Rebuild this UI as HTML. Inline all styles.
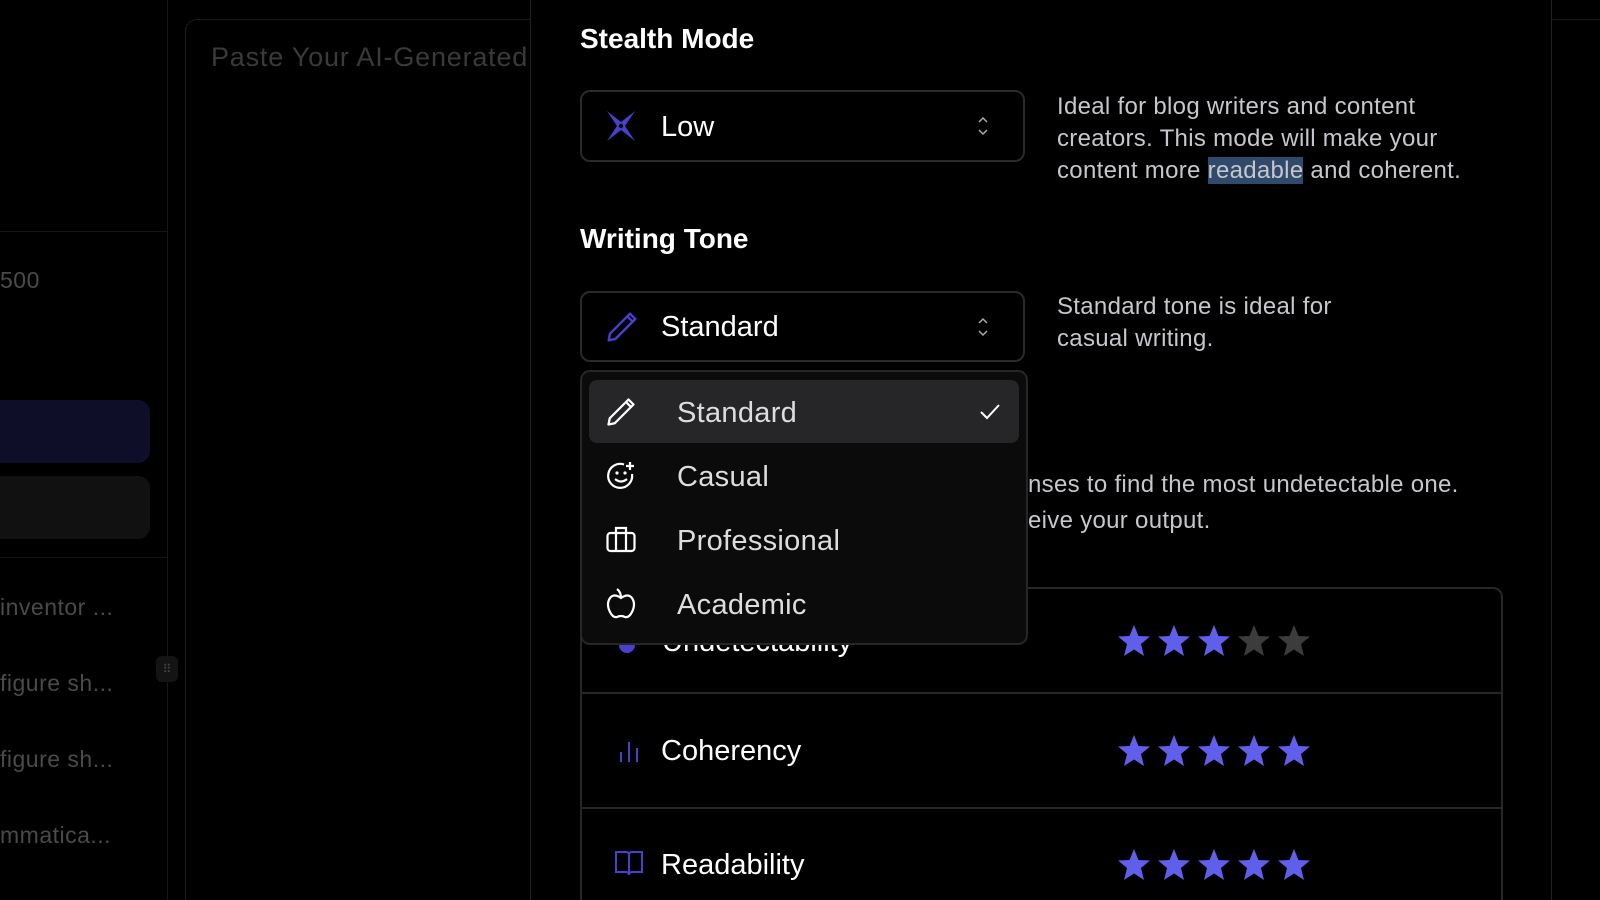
<!DOCTYPE html>
<html><head><meta charset="utf-8"><style>
*{box-sizing:border-box;margin:0;padding:0}
html,body{width:1600px;height:900px;overflow:hidden;background:#000}
body{font-family:"Liberation Sans",sans-serif}
#w{position:relative;width:1600px;height:900px;overflow:hidden}
.a{position:absolute;white-space:nowrap}
.side{color:#4a4a4a;font-size:23px;letter-spacing:0.5px}
</style></head><body><div id="w">
<div class="a" style="left:167px;top:0;width:1px;height:900px;background:#161616"></div>
<div class="a" style="left:0;top:231px;width:167px;height:1px;background:#161616"></div>
<div class="a" style="left:0;top:557px;width:167px;height:1px;background:#161616"></div>
<div class="a side" style="left:0;top:267px">500</div>
<div class="a" style="left:-20px;top:400px;width:170px;height:63px;border-radius:12px;background:#0e0e28"></div>
<div class="a" style="left:-20px;top:476px;width:170px;height:63px;border-radius:12px;background:#111"></div>
<div class="a side" style="left:0;top:594px">inventor ...</div>
<div class="a side" style="left:0;top:670px">figure sh...</div>
<div class="a side" style="left:0;top:746px">figure sh...</div>
<div class="a side" style="left:0;top:822px">mmatica...</div>
<div class="a" style="left:156px;top:656px;width:22px;height:26px;border-radius:6px;background:#141414;color:#444;font-size:12px;text-align:center;line-height:26px">⠿</div>
<div class="a" style="left:185px;top:19px;width:1415px;height:881px;border:1px solid #1a1a1a;border-right:none;border-bottom:none;border-radius:12px 0 0 0"></div>
<div class="a" style="left:211px;top:42px;color:#3a3a3a;font-size:27px;letter-spacing:0.8px">Paste Your AI-Generated</div>
<div class="a" style="left:530px;top:0;width:1022px;height:900px;background:#000;border-left:1px solid #222;border-right:1px solid #222"></div>
<div class="a" style="left:580px;top:23px;color:#fff;font-size:28px;font-weight:bold">Stealth Mode</div>
<div class="a" style="left:580px;top:90px;width:445px;height:72px;border:2px solid #2a2a2a;border-radius:10px"></div>
<svg class="a" style="left:605px;top:110px" width="32" height="32" viewBox="0 0 32 32"><path d="M2 1 L16 12 L30 1 L20 16 L30 31 L16 20 L2 31 L12 16 Z" fill="#4a3fd0"/><circle cx="16" cy="16" r="2.2" fill="#000"/></svg>
<div class="a" style="left:661px;top:111px;color:#fff;font-size:29px">Low</div>
<svg class="a" style="left:975px;top:114px" width="16" height="24" viewBox="0 0 16 24"><path d="M4 8 L8 4 L12 8 M4 16 L8 20 L12 16" stroke="#aaa" stroke-width="1.5" fill="none"/></svg>
<div class="a" style="left:1057px;top:91px;color:#c6c6cc;font-size:24px;letter-spacing:0.3px;line-height:32px;white-space:normal;width:430px">Ideal for blog writers and content creators. This mode will make your content more <span style="background:#2f4a6a">readable</span> and coherent.</div>
<div class="a" style="left:580px;top:223px;color:#fff;font-size:28px;font-weight:bold">Writing Tone</div>
<div class="a" style="left:580px;top:291px;width:445px;height:71px;border:2px solid #2a2a2a;border-radius:10px"></div>
<svg class="a" style="left:606px;top:311px" width="32" height="32" viewBox="0 0 24 24"><path d="M18 2 L22 6 L7 21 L2 22 L3 17 Z M16 4 L20 8" stroke="#4a3fd0" stroke-width="1.8" fill="none" stroke-linejoin="round"/></svg>
<div class="a" style="left:661px;top:311px;color:#fff;font-size:29px">Standard</div>
<svg class="a" style="left:975px;top:315px" width="16" height="24" viewBox="0 0 16 24"><path d="M4 8 L8 4 L12 8 M4 16 L8 20 L12 16" stroke="#aaa" stroke-width="1.5" fill="none"/></svg>
<div class="a" style="left:1057px;top:291px;color:#c6c6cc;font-size:24px;letter-spacing:0.3px;line-height:32px">Standard tone is ideal for<br>casual writing.</div>
<div class="a" style="left:1028px;top:471px;color:#c6c6cc;font-size:24px;letter-spacing:0.3px">nses to find the most undetectable one.</div>
<div class="a" style="left:1028px;top:507px;color:#c6c6cc;font-size:24px;letter-spacing:0.3px">eive your output.</div>
<div class="a" style="left:580px;top:587px;width:923px;height:313px;border:2px solid #262626;border-bottom:none;border-radius:10px 10px 0 0"></div>
<div class="a" style="left:580px;top:692px;width:923px;height:2px;background:#262626"></div>
<div class="a" style="left:580px;top:807px;width:923px;height:2px;background:#262626"></div>
<div class="a" style="left:619px;top:637px;width:16px;height:16px;border-radius:50%;background:#4a3fd0"></div>
<div class="a" style="left:662px;top:626px;color:#fff;font-size:29px">Undetectability</div>
<svg class="a" style="left:617px;top:738px" width="26" height="26" viewBox="0 0 26 26"><path d="M4 24V14 M12 24V4 M20 24V10" stroke="#4a3fd0" stroke-width="2"/></svg>
<div class="a" style="left:661px;top:735px;color:#fff;font-size:29px">Coherency</div>
<svg class="a" style="left:613px;top:849px" width="32" height="30" viewBox="0 0 32 30"><path d="M3 3 H13 Q16 3 16 6 V26 Q16 23 13 23 H3 Z M29 3 H19 Q16 3 16 6 V26 Q16 23 19 23 H29 Z" stroke="#4a3fd0" stroke-width="2" fill="none"/></svg>
<div class="a" style="left:661px;top:849px;color:#fff;font-size:29px">Readability</div>
<svg width="0" height="0" style="position:absolute"><defs><path id="st" d="M17 1 L21.5 12 L33 12.5 L24 20 L27 32 L17 25.5 L7 32 L10 20 L1 12.5 L12.5 12 Z"/></defs></svg>
<div class="a" style="left:1117px;top:624px"><svg width="210" height="34"><use href="#st" fill="#5f5fec"/><use href="#st" x="40" fill="#5f5fec"/><use href="#st" x="80" fill="#5f5fec"/><use href="#st" x="120" fill="#3c3c3c"/><use href="#st" x="160" fill="#3c3c3c"/></svg></div>
<div class="a" style="left:1117px;top:734px"><svg width="210" height="34"><use href="#st" fill="#5f5fec"/><use href="#st" x="40" fill="#5f5fec"/><use href="#st" x="80" fill="#5f5fec"/><use href="#st" x="120" fill="#5f5fec"/><use href="#st" x="160" fill="#5f5fec"/></svg></div>
<div class="a" style="left:1117px;top:848px"><svg width="210" height="34"><use href="#st" fill="#5f5fec"/><use href="#st" x="40" fill="#5f5fec"/><use href="#st" x="80" fill="#5f5fec"/><use href="#st" x="120" fill="#5f5fec"/><use href="#st" x="160" fill="#5f5fec"/></svg></div>
<div class="a" style="left:580px;top:370px;width:448px;height:275px;background:#0b0b0b;border:2px solid #262626;border-radius:10px"></div>
<div class="a" style="left:589px;top:380px;width:430px;height:63px;background:#262628;border-radius:8px"></div>
<svg class="a" style="left:606px;top:397px" width="30" height="30" viewBox="0 0 24 24"><path d="M18 2 L22 6 L7 21 L2 22 L3 17 Z M16 4 L20 8" stroke="#fff" stroke-width="1.8" fill="none" stroke-linejoin="round"/></svg>
<div class="a" style="left:677px;top:397px;color:#ddd;font-size:29px;letter-spacing:0.3px">Standard</div>
<svg class="a" style="left:978px;top:402px" width="24" height="20" viewBox="0 0 24 20"><path d="M3 10 L9 16 L21 3" stroke="#fff" stroke-width="2" fill="none"/></svg>
<svg class="a" style="left:606px;top:461px" width="30" height="30" viewBox="0 0 30 30"><path d="M26 13 A12 12 0 1 1 18 3.5" stroke="#fff" stroke-width="2.2" fill="none"/><path d="M24 1V9 M20 5H28" stroke="#fff" stroke-width="2.2"/><circle cx="11" cy="12" r="1.6" fill="#fff"/><circle cx="19" cy="12" r="1.6" fill="#fff"/><path d="M9 18 Q15 23 21 18" stroke="#fff" stroke-width="2.2" fill="none"/></svg>
<div class="a" style="left:677px;top:461px;color:#ddd;font-size:29px;letter-spacing:0.3px">Casual</div>
<svg class="a" style="left:606px;top:525px" width="30" height="30" viewBox="0 0 30 30"><rect x="1.5" y="8" width="27" height="18" rx="3" stroke="#fff" stroke-width="2.2" fill="none"/><path d="M10 8V3H20V8 M10 8V26 M20 8V26" stroke="#fff" stroke-width="2.2" fill="none"/></svg>
<div class="a" style="left:677px;top:525px;color:#ddd;font-size:29px;letter-spacing:0.3px">Professional</div>
<svg class="a" style="left:606px;top:588px" width="30" height="32" viewBox="0 0 30 32"><path d="M15 10 Q8 5 4 10 Q0 16 4 24 Q7 30 11 29 Q15 27 19 29 Q23 30 26 24 Q30 16 26 10 Q22 5 15 10 Z" stroke="#fff" stroke-width="2.2" fill="none"/><path d="M15 10 Q15 4 11 1" stroke="#fff" stroke-width="2.2" fill="none"/></svg>
<div class="a" style="left:677px;top:589px;color:#ddd;font-size:29px;letter-spacing:0.3px">Academic</div>
</div></body></html>
